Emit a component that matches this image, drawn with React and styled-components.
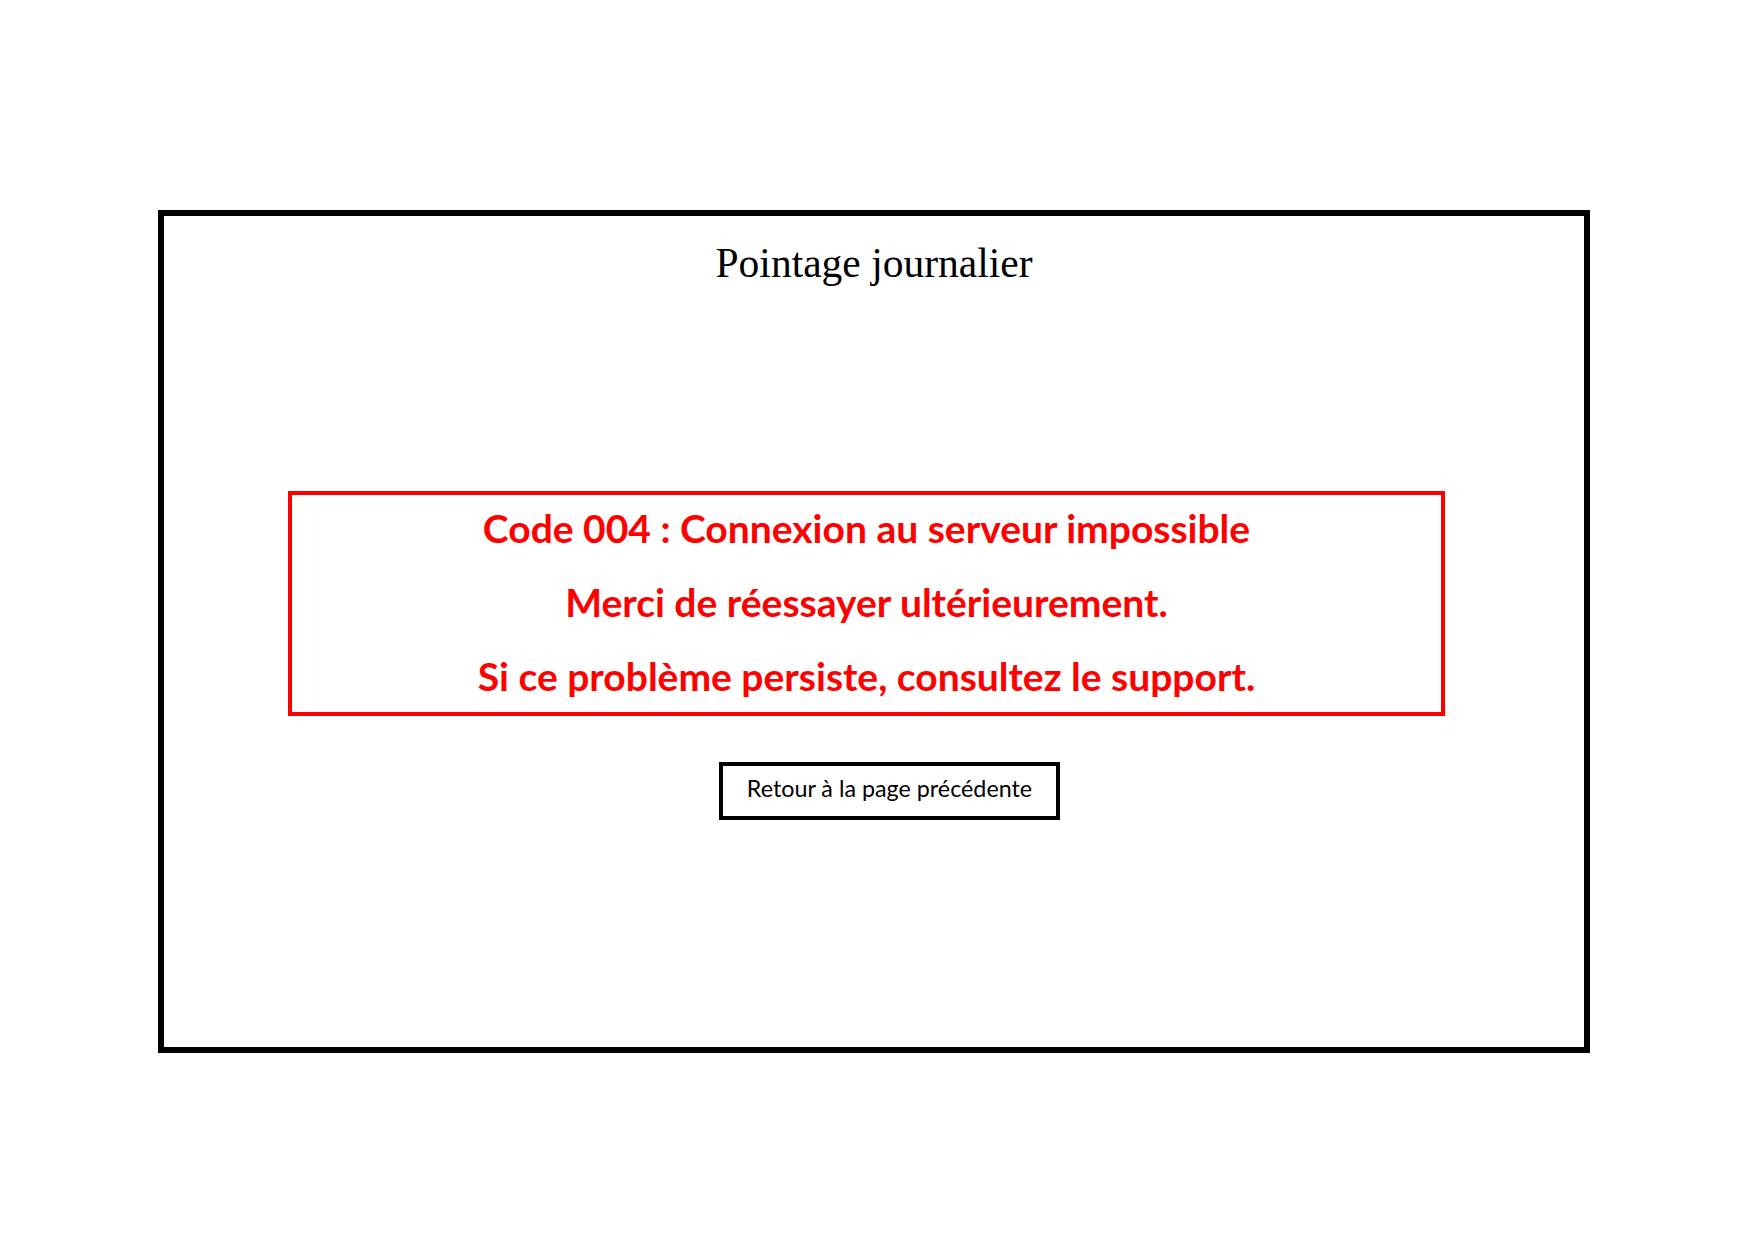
import React from 'react'
import styled, { createGlobalStyle } from 'styled-components'

const GlobalStyle = createGlobalStyle`
  html, body {
    margin: 0;
    padding: 0;
    background: #ffffff;
  }
`

const Page = styled.div`
  width: 1754px;
  height: 1240px;
  padding: 210px 0 0 158px;
  box-sizing: border-box;
`

const Frame = styled.section`
  width: 1432px;
  height: 843px;
  box-sizing: border-box;
  border: 6px solid #000;
  display: flex;
  flex-direction: column;
  align-items: stretch;
  padding-top: 24px;
`

const Title = styled.h1`
  margin: 0;
  font-family: "Liberation Serif", "Times New Roman", serif;
  font-weight: normal;
  font-size: 41.5px;
  line-height: 47px;
  text-align: center;
  color: #000;
`

const ErrorBox = styled.div`
  margin: 204px 139px 0 124px;
  border: 4px solid #ff0000;
  padding: 11px 0 14px;
  display: flex;
  flex-direction: column;
  gap: 30px;
`

const ErrorLine = styled.p`
  margin: 0;
  font-family: Lato, "Liberation Sans", sans-serif;
  font-weight: 700;
  font-size: 39px;
  line-height: 44px;
  color: #ff0000;
  text-align: center;
`

const BackButton = styled.button`
  align-self: center;
  margin: 46px 0 0 31px;
  width: 341px;
  height: 58px;
  box-sizing: border-box;
  border: 4px solid #000;
  background: #fff;
  padding: 9px 0 14px;
  font-family: Lato, "Liberation Sans", sans-serif;
  font-size: 23.3px;
  line-height: 27px;
  color: #000;
  text-align: center;
  cursor: pointer;
`

const messages = [
  'Code 004 : Connexion au serveur impossible',
  'Merci de réessayer ultérieurement.',
  'Si ce problème persiste, consultez le support.',
]

export default function App() {
  return (
    <Page>
      <GlobalStyle />
      <Frame>
        <Title>Pointage journalier</Title>
        <ErrorBox>
          {messages.map((m) => (
            <ErrorLine key={m}>{m}</ErrorLine>
          ))}
        </ErrorBox>
        <BackButton type="button">Retour à la page précédente</BackButton>
      </Frame>
    </Page>
  )
}
